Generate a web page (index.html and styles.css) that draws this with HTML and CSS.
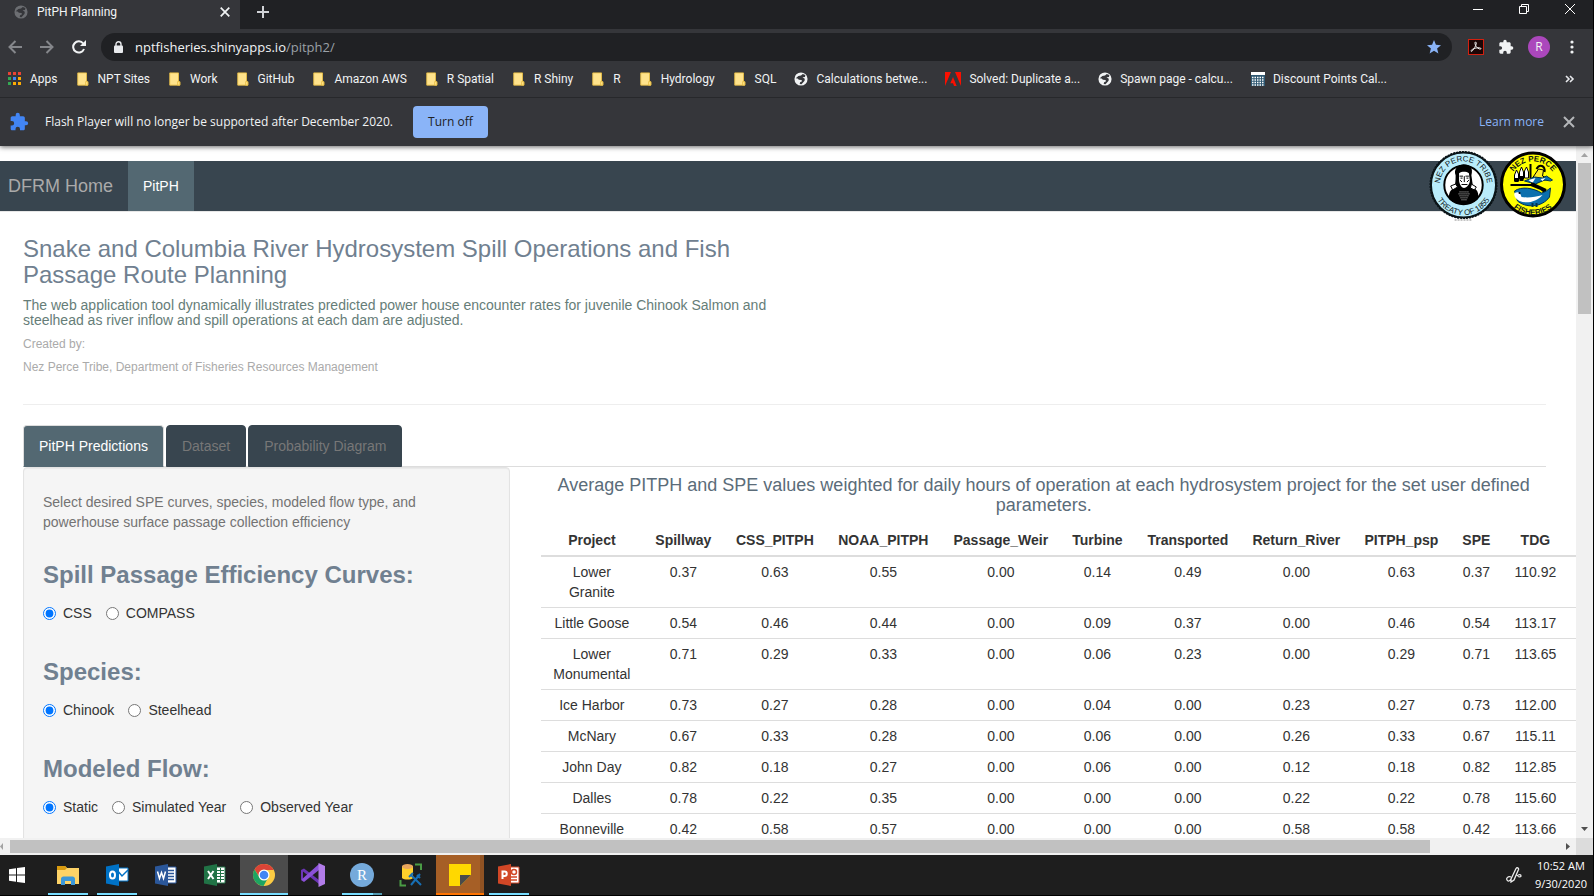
FILE: index.html
```html
<!DOCTYPE html>
<html lang="en">
<head>
<meta charset="utf-8">
<title>PitPH Planning</title>
<link rel="stylesheet" href="styles.css">
</head>
<body>
<svg class="defs" aria-hidden="true">
  <symbol id="folder" viewBox="0 0 14 16"><path d="M1 1h10v10.5h1.5V15H1z" fill="#ffe38c" stroke="#e9bf45"/><path d="M10 15v-4h2.500v4z" fill="#ffe38c" stroke="#e9bf45"/></symbol>
  <symbol id="globe" viewBox="0 0 16 16"><circle cx="8" cy="8" r="7.500" fill="currentColor"/><path d="M2 7 5 4.500l3-.5L10 2.200l3 1.200-.5 2.200-2.800.5 2.600 1.500-.2 2.500-3.500 4-2.100-.4.500-1.900 2.200-1.200-.6-1.500-3-.3-1.500-1.300z" fill="#35363a"/></symbol>
  <symbol id="puzzle" viewBox="0 0 24 24"><path fill="currentColor" d="M20.500 11H19V7c0-1.100-.9-2-2-2h-4V3.500a2.500 2.500 0 0 0-5 0V5H4c-1.100 0-2 .9-2 2v3.800h1.500a2.700 2.700 0 0 1 0 5.400H2V20c0 1.100.9 2 2 2h3.800v-1.500a2.700 2.700 0 0 1 5.400 0V22H17c1.100 0 2-.9 2-2v-4h1.500a2.500 2.500 0 0 0 0-5z"/></symbol>
  <symbol id="cross" viewBox="0 0 14 14"><path d="M2 2l10 10M12 2 2 12" stroke="currentColor" fill="none" stroke-width="2"/></symbol>
</svg>

<div class="window">
  <header class="browser">
    <div class="tabstrip">
      <div class="browser-tab">
        <svg class="i14 dim"><use href="#globe"/></svg>
        <span class="browser-tab-title">PitPH Planning</span>
        <button class="icon-btn" aria-label="Close tab"><svg class="i12"><use href="#cross"/></svg></button>
      </div>
      <button class="icon-btn newtab" aria-label="New tab"><svg class="i12" viewBox="0 0 12 12"><path d="M6 0v12M0 6h12" stroke="#d0d2d6" stroke-width="2"/></svg></button>
      <div class="window-controls">
        <button class="icon-btn" aria-label="Minimize"><svg class="i10" viewBox="0 0 10 10"><path d="M0 5.500h10" stroke="#fff"/></svg></button>
        <button class="icon-btn" aria-label="Restore"><svg class="i10" viewBox="0 0 10 10"><path d="M.5 2.500h7v7h-7zM2.500 2.500v-2h7v7h-2" fill="none" stroke="#fff"/></svg></button>
        <button class="icon-btn" aria-label="Close"><svg class="i10" viewBox="0 0 10 10"><path d="M0 0l10 10M10 0 0 10" stroke="#fff" fill="none"/></svg></button>
      </div>
    </div>

    <div class="toolbar">
      <button class="icon-btn" aria-label="Back"><svg class="i14" viewBox="0 0 14 14"><path d="M14 7H1.500M7.500 1l-6 6 6 6" fill="none" stroke="#85878b" stroke-width="2"/></svg></button>
      <button class="icon-btn" aria-label="Forward"><svg class="i14" viewBox="0 0 14 14"><path d="M0 7h12.500M6.500 1l6 6-6 6" fill="none" stroke="#85878b" stroke-width="2"/></svg></button>
      <button class="icon-btn" aria-label="Reload"><svg class="i14" viewBox="0 0 14 14"><path d="M12 9a5.600 5.600 0 1 1-.8-5.500" fill="none" stroke="#f1f3f4" stroke-width="2"/><path d="M14 0v6H8z" fill="#f1f3f4"/></svg></button>
      <div class="omnibox">
        <svg class="lock" viewBox="0 0 9 12"><path d="M2 5V3.200a2.500 2.500 0 0 1 5 0V5" fill="none" stroke="#e8eaed" stroke-width="1.400"/><rect y="4.500" width="9" height="7.500" rx="1" fill="#e8eaed"/></svg>
        <span class="url">nptfisheries.shinyapps.io<span class="url-path">/pitph2/</span></span>
        <svg class="i14" viewBox="0 0 24 24"><path d="M12 0l3.300 8.300 8.700.6-6.700 5.600 2.200 8.700L12 18.500l-7.500 4.700 2.200-8.700L0 8.900l8.700-.6z" fill="#8ab4f8"/></svg>
      </div>
      <div class="extensions">
        <svg class="i16" viewBox="0 0 16 16"><rect x=".5" y=".5" width="15" height="15" fill="#1c0606" stroke="#d3200f"/><path d="M7.500 3c1.500 0 .6 3-.8 5.500S3.600 13 3 12.200c-.5-1 2.500-2.700 5-3.200s5-.3 5 .6c-.1 1.300-3.200.1-4.700-2S6.600 3.200 7.500 3z" fill="none" stroke="#eee"/></svg>
        <svg class="i16 light"><use href="#puzzle"/></svg>
        <span class="avatar">R</span>
        <svg class="i16" viewBox="0 0 16 16"><g fill="#f1f3f4"><circle cx="8" cy="3" r="1.600"/><circle cx="8" cy="8" r="1.600"/><circle cx="8" cy="13" r="1.600"/></g></svg>
      </div>
    </div>

    <nav class="bookmarks" aria-label="Bookmarks">
      <a href="#"><svg class="i14" viewBox="0 0 14 14"><path fill="#ea4335" d="M0 0h3v3H0zM5 0h3v3H5zM10 0h3v3h-3z"/><path fill="#34a853" d="M0 5h3v3H0zM0 10h3v3H0z"/><path fill="#4285f4" d="M5 5h3v3H5z"/><path fill="#fbab05" d="M10 5h3v3h-3zM5 10h3v3H5zM10 10h3v3h-3z"/></svg>Apps</a>
      <a href="#"><svg class="i14"><use href="#folder"/></svg>NPT Sites</a>
      <a href="#"><svg class="i14"><use href="#folder"/></svg>Work</a>
      <a href="#"><svg class="i14"><use href="#folder"/></svg>GitHub</a>
      <a href="#"><svg class="i14"><use href="#folder"/></svg>Amazon AWS</a>
      <a href="#"><svg class="i14"><use href="#folder"/></svg>R Spatial</a>
      <a href="#"><svg class="i14"><use href="#folder"/></svg>R Shiny</a>
      <a href="#"><svg class="i14"><use href="#folder"/></svg>R</a>
      <a href="#"><svg class="i14"><use href="#folder"/></svg>Hydrology</a>
      <a href="#"><svg class="i14"><use href="#folder"/></svg>SQL</a>
      <a href="#"><svg class="i14 light"><use href="#globe"/></svg>Calculations betwe...</a>
      <a href="#"><svg class="i16" viewBox="0 0 16 14"><path fill="#fa0f00" d="M0 0h6L0 14zM10 0h6v14zM8 5l3.700 9H9l-1-2.700H5.300z"/></svg>Solved: Duplicate a...</a>
      <a href="#"><svg class="i14 light"><use href="#globe"/></svg>Spawn page - calcu...</a>
      <a href="#"><svg class="i14" viewBox="0 0 14 14"><path fill="#2f5872" d="M0 0h14v14H0z"/><path fill="#fff" d="M0 0h14v3H0z"/><path d="M1 5.500h12M1 8h12M1 10.500h12M1 13h12" stroke="#fff" stroke-width="1.500" stroke-dasharray="1.500 1"/></svg>Discount Points Cal...</a>
      <button class="icon-btn more" aria-label="More bookmarks"><svg class="i10" viewBox="0 0 10 10"><path d="M1 2l3 3-3 3M5 2l3 3-3 3" fill="none" stroke="#e8eaed" stroke-width="1.600"/></svg></button>
    </nav>

    <div class="infobar">
      <svg class="i20 blue"><use href="#puzzle"/></svg>
      <span class="message">Flash Player will no longer be supported after December 2020.</span>
      <button class="turn-off">Turn off</button>
      <a class="learn" href="#">Learn more</a>
      <button class="icon-btn" aria-label="Dismiss"><svg class="i14 gray"><use href="#cross"/></svg></button>
    </div>
  </header>

  <div class="viewport">
    <main class="page">
      <nav class="navbar">
        <a class="brand" href="#">DFRM Home</a>
        <a class="nav-link" href="#">PitPH</a>
        <div class="seals">
          <svg class="seal" viewBox="0 0 70 72" role="img" aria-label="Nez Perce Tribe seal">
            <defs><path id="t1" d="M11 35a24 24 0 0 1 48 0"/><path id="b1" d="M4.500 35a30.500 30.500 0 0 0 61 0"/></defs>
            <circle cx="35" cy="35" r="33" fill="#b9ecfb" stroke="#0b1418" stroke-width="2"/>
            <circle cx="35" cy="35" r="33.500" fill="none" stroke="#0b1418" stroke-width="2" stroke-dasharray="2 1"/>
            <circle cx="35" cy="35" r="19.500" fill="#fff" stroke="#000" stroke-width="2"/>
            <path d="M21 50c-2-3 0-10 3-11 3-3 3-9 3-14-2-5 1-10 8-11 7 0 10 4 8 11 1 6 1 12 4 14 3 2 4 8 2 11-7 6-21 6-28 0z" fill="#000"/>
            <path d="M30.500 23c3-2 7-2 10 0l1 8c-1 5-4 7-6 7s-4-2-5-7z" fill="#fff"/>
            <path d="M31 26h3.500M37 26h3.500M35.800 26v6M33 34.500h6M31.500 30l2 2M40.500 30l-2 2M32 28h2M38 28h2" stroke="#000" fill="none"/>
            <path d="M22 36l5-2 2 3-5 3zM43 34l5 3-2 3-4-2z" fill="#fff" stroke="#000"/>
            <path d="M31 42h10M30 44h12M31 46h10M32 48h8M33 50h6" fill="none" stroke="#ccc" stroke-dasharray="1 1"/>
            <text class="seal-text"><textPath href="#t1" startOffset="50%" text-anchor="middle">NEZ PERCE TRIBE</textPath></text>
            <text class="seal-text"><textPath href="#b1" startOffset="50%" text-anchor="middle">TREATY OF 1855</textPath></text>
            <path d="M26 70.500h18" stroke="#888" stroke-dasharray="2 1"/>
          </svg>
          <svg class="seal" viewBox="0 0 68 72" role="img" aria-label="Nez Perce Fisheries seal">
            <defs><path id="t2" d="M11 35a23.500 23.500 0 0 1 47 0"/><path id="b2" d="M5.500 36a29 29 0 0 0 58 0"/></defs>
            <circle cx="34.500" cy="34.500" r="31.500" fill="#ff0" stroke="#000" stroke-width="3"/>
            <path d="M32 14v14M12 35h24" stroke="#000" stroke-width="2"/>
            <path d="M16 25l2-5 2 4v7h-4zM21 22l2-5 2 5v7h-4zM26 21l2-4 2 5v6h-4z" fill="#fff" stroke="#000"/><path d="M16 28h4v4h-4zM21 26h4v5h-4z" fill="#000"/>
            <path d="M34 28l6-9 5 1-1 6 6 3-11 3z" fill="#ffef28" stroke="#000"/>
            <path d="M38 19c3-6 9-3 8 3" fill="none" stroke="#000" stroke-width="2"/>
            <path d="M26 31l10-4 8 1 4-2 6 4-2 1-6-1-9 4z" fill="#0b6fae" stroke="#013450"/>
            <path d="M30 30l7-2-3 5zM42 29l5-1-3 3z" fill="#fff"/>
            <path d="M33 32l15 7-1 5-5-4-10-4z" fill="#000"/>
            <path d="M16 41c7-5 19-3 27 2 4-1 6-3 9-5l-1 9c-8 11-24 11-32 4z" fill="#0b6fae" stroke="#013450"/>
            <path d="M16 43c4-2 6 0 7 4 7 1 14 0 21-2-6 7-16 9-23 6-4-2-6-5-5-8z" fill="#fff"/>
            <circle cx="21" cy="43" r="1"/><path d="M34 53v4M38 53v4" stroke="#013450" stroke-width="2"/>
            <text class="seal-text bold"><textPath href="#t2" startOffset="50%" text-anchor="middle">NEZ PERCE</textPath></text>
            <text class="seal-text bold"><textPath href="#b2" startOffset="50%" text-anchor="middle">FISHERIES</textPath></text>
          </svg>
        </div>
      </nav>

      <div class="content">
        <section class="intro">
          <h2>Snake and Columbia River Hydrosystem Spill Operations and Fish Passage Route Planning</h2>
          <h5>The web application tool dynamically illustrates predicted power house encounter rates for juvenile Chinook Salmon and steelhead as river inflow and spill operations at each dam are adjusted.</h5>
          <h6>Created by:</h6>
          <h6>Nez Perce Tribe, Department of Fisheries Resources Management</h6>
        </section>
        <hr>
        <nav class="tabs">
          <a class="tab active" href="#">PitPH Predictions</a>
          <a class="tab" href="#">Dataset</a>
          <a class="tab" href="#">Probability Diagram</a>
        </nav>
        <div class="row">
          <form class="well">
            <p class="help">Select desired SPE curves, species, modeled flow type, and powerhouse surface passage collection efficiency</p>
            <fieldset>
              <legend>Spill Passage Efficiency Curves:</legend>
              <div class="options">
                <label><input type="radio" name="spe" checked>CSS</label>
                <label><input type="radio" name="spe">COMPASS</label>
              </div>
            </fieldset>
            <fieldset>
              <legend>Species:</legend>
              <div class="options">
                <label><input type="radio" name="species" checked>Chinook</label>
                <label><input type="radio" name="species">Steelhead</label>
              </div>
            </fieldset>
            <fieldset>
              <legend>Modeled Flow:</legend>
              <div class="options">
                <label><input type="radio" name="flow" checked>Static</label>
                <label><input type="radio" name="flow">Simulated Year</label>
                <label><input type="radio" name="flow">Observed Year</label>
              </div>
            </fieldset>
          </form>
          <section class="results">
            <h4>Average PITPH and SPE values weighted for daily hours of operation at each hydrosystem project for the set user defined parameters.</h4>
            <table>
              <colgroup><col class="w101"><col class="w82"><col class="w101"><col class="w116"><col class="w119"><col class="w74"><col class="w107"><col class="w110"><col class="w100"><col class="w50"><col class="w88"></colgroup>
              <thead><tr><th>Project</th><th>Spillway</th><th>CSS_PITPH</th><th>NOAA_PITPH</th><th>Passage_Weir</th><th>Turbine</th><th>Transported</th><th>Return_River</th><th>PITPH_psp</th><th>SPE</th><th>TDG</th></tr></thead>
              <tbody>
                <tr><td>Lower Granite</td><td>0.37</td><td>0.63</td><td>0.55</td><td>0.00</td><td>0.14</td><td>0.49</td><td>0.00</td><td>0.63</td><td>0.37</td><td>110.92</td></tr>
                <tr><td>Little Goose</td><td>0.54</td><td>0.46</td><td>0.44</td><td>0.00</td><td>0.09</td><td>0.37</td><td>0.00</td><td>0.46</td><td>0.54</td><td>113.17</td></tr>
                <tr><td>Lower Monumental</td><td>0.71</td><td>0.29</td><td>0.33</td><td>0.00</td><td>0.06</td><td>0.23</td><td>0.00</td><td>0.29</td><td>0.71</td><td>113.65</td></tr>
                <tr><td>Ice Harbor</td><td>0.73</td><td>0.27</td><td>0.28</td><td>0.00</td><td>0.04</td><td>0.00</td><td>0.23</td><td>0.27</td><td>0.73</td><td>112.00</td></tr>
                <tr><td>McNary</td><td>0.67</td><td>0.33</td><td>0.28</td><td>0.00</td><td>0.06</td><td>0.00</td><td>0.26</td><td>0.33</td><td>0.67</td><td>115.11</td></tr>
                <tr><td>John Day</td><td>0.82</td><td>0.18</td><td>0.27</td><td>0.00</td><td>0.06</td><td>0.00</td><td>0.12</td><td>0.18</td><td>0.82</td><td>112.85</td></tr>
                <tr><td>Dalles</td><td>0.78</td><td>0.22</td><td>0.35</td><td>0.00</td><td>0.00</td><td>0.00</td><td>0.22</td><td>0.22</td><td>0.78</td><td>115.60</td></tr>
                <tr><td>Bonneville</td><td>0.42</td><td>0.58</td><td>0.57</td><td>0.00</td><td>0.00</td><td>0.00</td><td>0.58</td><td>0.58</td><td>0.42</td><td>113.66</td></tr>
              </tbody>
            </table>
          </section>
        </div>
      </div>
    </main>
    <div class="vscroll">
      <svg class="arrow" viewBox="0 0 17 17"><path d="M5 11h7L8.500 7z" fill="#a3a3a3"/></svg>
      <div class="vtrack"><div class="vthumb"></div></div>
      <svg class="arrow" viewBox="0 0 17 17"><path d="M5 6h7l-3.500 4z" fill="#505050"/></svg>
    </div>
    <div class="hscroll">
      <svg class="harrow" viewBox="0 0 10 17"><path d="M3 5v7L0 8.500z" fill="#a3a3a3"/></svg>
      <div class="htrack"><div class="hthumb"></div></div>
      <svg class="arrow" viewBox="0 0 17 17"><path d="M7 5v7l4-3.500z" fill="#505050"/></svg>
    </div>
    <div class="corner"></div>
  </div>

  <footer class="taskbar">
    <button class="task start" aria-label="Start"><svg class="i16" viewBox="0 0 16 16"><path fill="#fff" d="M0 2.200 7 1.200v6.300H0zM8 1l8-1v7.500H8zM0 8.500h7v6.300l-7-1zM8 8.500h8V16l-8-1z"/></svg></button>
    <button class="task open" aria-label="File Explorer"><svg class="i24" viewBox="0 0 24 24"><path d="M1 3h8l2 2h12v16H1z" fill="#fdd367"/><path d="M1 3h8l2 2-2 2H1z" fill="#d99b10"/><path d="M5 22v-6c0-1.500 1-2.500 2.500-2.500h9c1.500 0 2.500 1 2.500 2.500v6h-4v-4H9v4z" fill="#3b97d9"/></svg></button>
    <button class="task open" aria-label="Outlook"><svg class="i24" viewBox="0 0 24 24"><path d="M11 5h12v13H11z" fill="#fff" stroke="#0072c6"/><path d="M12 7l5 6 6-6" fill="none" stroke="#0072c6" stroke-width="1.500"/><path d="M1 3.500 14 1v22L1 20.500z" fill="#0072c6"/><ellipse cx="7.500" cy="12" rx="2.500" ry="3.500" fill="none" stroke="#fff" stroke-width="2"/></svg></button>
    <button class="task" aria-label="Word"><svg class="i24" viewBox="0 0 24 24"><path d="M11 4h11v16H11z" fill="#fff" stroke="#2b579a"/><path d="M14 7.500h6M14 10.500h6M14 13.500h6M14 16.500h6" stroke="#2b579a" stroke-width="1.500"/><path d="M1 3.500 14 1v22L1 20.500z" fill="#2b579a"/><path d="M3.500 8.500l2 7 2-6 2 6 2-7" fill="none" stroke="#fff" stroke-width="1.500"/></svg></button>
    <button class="task" aria-label="Excel"><svg class="i24" viewBox="0 0 24 24"><path d="M11 4h11v16H11z" fill="#fff" stroke="#217346"/><path d="M14 7.500h7M14 10.500h7M14 13.500h7M14 16.500h7M17.500 5v14" stroke="#217346"/><path d="M1 3.500 14 1v22L1 20.500z" fill="#217346"/><path d="M5 8l5.500 8M10.500 8 5 16" fill="none" stroke="#fff" stroke-width="2"/></svg></button>
    <button class="task current" aria-label="Chrome"><svg class="i24" viewBox="0 0 24 24"><circle cx="12" cy="12" r="11" fill="#fbcb43"/><path d="M2.500 6.500A11 11 0 0 1 21.800 7H12a5 5 0 0 0-4.500 7z" fill="#db4437"/><path d="M2.500 6.500A11 11 0 0 0 11.500 23l4.800-8.500a5 5 0 0 1-8.700 0z" fill="#1da462"/><circle cx="12" cy="12" r="5.500" fill="#fff"/><circle cx="12" cy="12" r="4.300" fill="#4285f4"/></svg></button>
    <button class="task" aria-label="Visual Studio"><svg class="i24" viewBox="0 0 24 24"><path d="M0 7l3-1.500L18 17v4L2 8.500V16l-2 1z" fill="#6b35b5"/><path d="M0 17 18 1v6L3 19z" fill="#8b50d8"/><path d="M17.500 0 24 3v18l-6.500 3z" fill="#b27ce9"/></svg></button>
    <button class="task open grouped" aria-label="RStudio"><svg class="i24" viewBox="0 0 24 24"><circle cx="12" cy="12" r="12" fill="#75aadb"/><text x="12" y="17" class="r-glyph">R</text></svg></button>
    <button class="task" aria-label="Database tools"><svg class="i24" viewBox="0 0 24 24"><path d="M3 3v12c2 2 9 2 11 0V3z" fill="#ffd02b"/><ellipse cx="8.500" cy="3.500" rx="5.500" ry="2.500" fill="#e8a55d"/><path d="M16 1.500h6V7M1.500 17v5.500H7" fill="none" stroke="#4a9c45" stroke-width="2"/><path d="M12 12l10 10M21 11l-9 11M10 14l4-4M18 12l3 3" stroke="#176fb5" stroke-width="2"/></svg></button>
    <button class="task notes" aria-label="Sticky Notes"><svg class="i24" viewBox="0 0 24 24"><path d="M1 1h22v11L12 23H1z" fill="#ffd800"/><path d="M12 12h11L12 23z" fill="#4a4a4a"/></svg></button>
    <button class="task open" aria-label="PowerPoint"><svg class="i24" viewBox="0 0 24 24"><path d="M11 4h11v16H11z" fill="#fff" stroke="#d24726"/><circle cx="17" cy="9" r="2.500" fill="none" stroke="#d24726" stroke-width="1.500"/><path d="M14 14h6M14 17h6" stroke="#d24726" stroke-width="1.500"/><path d="M1 3.500 14 1v22L1 20.500z" fill="#d24726"/><path d="M5.500 16V8.500h2a2 2 0 0 1 0 4.500h-2" fill="none" stroke="#fff" stroke-width="2"/></svg></button>
    <svg class="pen i16" viewBox="0 0 16 16"><path d="M5 12 10 1.500c1-1.500 3-.5 2.500 1L8 13l-3 2zM11 9c2-2 4-1.500 4 0 0 1.200-2 1-3 .5M5 10c-3-1-5 1-4 3s3 1 4-1" fill="none" stroke="#eee" stroke-width="1.300"/></svg>
    <div class="clock"><span>10:52 AM</span><span>9/30/2020</span></div>
  </footer>
</div>
</body>
</html>
```
FILE: styles.css
```css
* { box-sizing: border-box; }
body { margin: 0; background: #000; overflow: hidden; }
a { text-decoration: none; color: inherit; }
svg { display: block; flex: none; }
.defs { position: absolute; width: 0; height: 0; }

.window {
  height: 100vh;
  display: flex;
  flex-direction: column;
  padding: 0 1px 1px 0;
  font-family: "Liberation Sans", Arial, sans-serif;
  font-size: 14px;
  line-height: 20px;
  color: #333;
}

.i10 { width: 10px; height: 10px; }
.i12 { width: 12px; height: 12px; }
.i14 { width: 14px; height: 14px; }
.i16 { width: 16px; height: 16px; }
.i20 { width: 20px; height: 20px; }
.i24 { width: 24px; height: 24px; }
.dim { color: #6c6e72; }
.light { color: #f1f3f4; }
.blue { color: #4285f4; }
.gray { color: #b4b6b9; }

.icon-btn {
  border: 0;
  padding: 0;
  background: none;
  color: #f1f3f4;
  display: flex;
  align-items: center;
}

/* Browser chrome */
.browser {
  position: relative;
  z-index: 1;
  background: #35363a;
  color: #f1f3f4;
  font-family: "Open Sans", "Noto Sans", sans-serif;
  font-size: 12px;
  box-shadow: 0 1px 5px rgba(0, 0, 0, .6);
}
.tabstrip { display: flex; height: 29px; background: #202124; }
.browser-tab {
  display: flex;
  align-items: center;
  width: 240px;
  height: 29px;
  padding: 0 9px 5px 14px;
  gap: 9px;
  background: #35363a;
}
.browser-tab-title { flex: 1; font-family: Roboto, sans-serif; }
.newtab { margin: 0 auto 5px 17px; }
.window-controls { display: flex; gap: 36px; padding: 0 18px 12px 0; }

.toolbar { display: flex; align-items: center; height: 36px; padding: 0 13px 0 8px; gap: 18px; }
.omnibox {
  flex: 1;
  display: flex;
  align-items: center;
  height: 28px;
  padding: 0 11px 0 13px;
  margin: 0 -2px 0 -3px;
  border-radius: 14px;
  background: #202124;
  font-size: 13px;
}
.lock { width: 9px; height: 12px; margin-right: 12px; }
.url { flex: 1; }
.url-path { color: #9aa0a6; }
.extensions { display: flex; align-items: center; gap: 14px; }
.avatar {
  width: 22px;
  height: 22px;
  border-radius: 50%;
  background: #ab47bc;
  text-align: center;
  line-height: 22px;
}

.bookmarks {
  display: flex;
  align-items: center;
  height: 33px;
  padding: 0 18px 4px 8px;
  gap: 18px;
  border-bottom: 1px solid #27282b;
  font-family: Roboto, sans-serif;
  white-space: nowrap;
}
.bookmarks a { display: flex; align-items: center; gap: 8px; }
.more { margin-left: auto; }

.infobar {
  display: flex;
  align-items: center;
  height: 48px;
  padding: 0 17px 0 9px;
}
.message { margin: 0 20px 0 16px; }
.turn-off {
  width: 75px;
  height: 32px;
  border: 0;
  border-radius: 4px;
  background: #8ab4f8;
  color: #202124;
  font: inherit;
}
.learn { margin-left: auto; margin-right: 18px; color: #8ab4f8; }

/* Page viewport with its scrollbars */
.viewport {
  flex: 1;
  min-height: 0;
  display: grid;
  grid-template: minmax(0, 1fr) 17px / minmax(0, 1fr) 17px;
}
.page { overflow: hidden; background: #fff; }
.vscroll { display: flex; flex-direction: column; background: #f1f1f1; }
.arrow { width: 17px; height: 17px; }
.harrow { width: 10px; height: 17px; }
.vtrack { flex: 1; padding: 0 2px; }
.vthumb { height: 23%; background: #c1c1c1; }
.hscroll { display: flex; background: #f1f1f1; }
.htrack { flex: 1; padding: 2px 0; }
.hthumb { width: 91.7%; height: 13px; background: #c1c1c1; }
.corner { background: #dcdcdc; }

.navbar {
  position: relative;
  display: flex;
  height: 51px;
  margin-top: 15px;
  background: #38454f;
  border-bottom: 1px solid #e7e7e7;
  line-height: 50px;
}
.brand { padding: 0 15px 0 8px; font-size: 18px; color: #aaa; }
.nav-link { padding: 0 15px; background: #536872; color: #fff; }
.seals { position: absolute; top: -11px; right: 9px; display: flex; }
.seal { width: 69px; height: 72px; }
.seal-text { font: 8px "Liberation Sans", sans-serif; fill: #0b1418; }
.seal-text.bold { font-weight: bold; }

.content { padding: 24px 30px 0 23px; }
.intro { width: 50%; }
h2, h4, h5, h6 { margin: 0; font-weight: normal; }
h2 { font-size: 24px; line-height: 26px; color: #708090; }
h5 { margin-top: 10px; font-size: 14px; line-height: 15px; color: #667d78; }
h6 { margin-top: 10px; font-size: 12px; line-height: 13px; color: #aaa; }
hr { margin: 30px 0 20px; border: 0; border-top: 1px solid #eee; }

.tabs { display: flex; gap: 2px; height: 42px; border-bottom: 1px solid #ddd; }
.tab {
  height: 42px;
  padding: 0 15px;
  border: 1px solid #38454f;
  border-radius: 4px 4px 0 0;
  background: #38454f;
  color: #777;
  line-height: 40px;
}
.tab.active { background: #536872; border-color: #ddd; border-bottom-color: #536872; color: #fff; }

.row { display: grid; grid-template-columns: 32% minmax(0, 1fr); gap: 31px; }
.well {
  min-height: 420px;
  padding: 24px 19px;
  border: 1px solid #e3e3e3;
  border-radius: 4px;
  background: #f5f5f5;
  box-shadow: inset 0 1px 1px rgba(0, 0, 0, .05);
}
.help { width: 400px; max-width: 100%; margin: 0 0 30px; color: #737373; }
fieldset { margin: 0 0 36px; padding: 0; border: 0; }
legend { padding: 0; margin-bottom: 15px; font-size: 24px; line-height: 26px; font-weight: bold; color: #708090; }
.options { display: flex; gap: 14px; }
.options label { display: flex; align-items: center; gap: 7px; }
.options input { width: 13px; height: 13px; margin: 0; accent-color: #0075ff; }

.results h4 { margin: 8px 0 10px; font-size: 18px; line-height: 20px; color: #5b6c79; text-align: center; }
table { width: 1048px; table-layout: fixed; border-collapse: separate; border-spacing: 0; text-align: center; }
th { padding: 5px 0; border-bottom: 2px solid #ddd; }
td { padding: 5px 8px; border-bottom: 1px solid #ddd; vertical-align: top; }
th:last-child, td:last-child { padding-right: 20px; padding-left: 0; }
.w50 { width: 50px; }
.w74 { width: 74px; }
.w82 { width: 82px; }
.w88 { width: 88px; }
.w100 { width: 100px; }
.w101 { width: 101px; }
.w107 { width: 107px; }
.w110 { width: 110px; }
.w116 { width: 116px; }
.w119 { width: 119px; }

/* Taskbar */
.taskbar { display: flex; gap: 1px; height: 40px; background: #1e1e1e; color: #fff; }
.task {
  position: relative;
  display: flex;
  justify-content: center;
  align-items: center;
  width: 48px;
  padding: 0;
  border: 0;
  background: none;
}
.start { width: 43px; padding-right: 9px; }
.open::after, .current::after, .notes::after {
  content: "";
  position: absolute;
  left: 4px;
  right: 4px;
  bottom: 0;
  height: 2px;
  background: #76dcff;
}
.current { background: #4c4c4c; }
.current::after { left: 0; right: 0; }
.grouped::after { background: linear-gradient(90deg, #76dcff 78%, #5299b0 78%); }
.notes { background: linear-gradient(90deg, #a65f26 92%, #8f5223 92%); }
.notes::after { left: 0; right: 0; background: #ff7300; }
.r-glyph { font: 15px "Liberation Serif", serif; fill: #fff; text-anchor: middle; }
.pen { align-self: center; margin-left: auto; }
.clock {
  display: flex;
  flex-direction: column;
  align-items: center;
  padding: 2px 6px 0 12px;
  font: 11px/18px "Open Sans", "Noto Sans", sans-serif;
}
```
